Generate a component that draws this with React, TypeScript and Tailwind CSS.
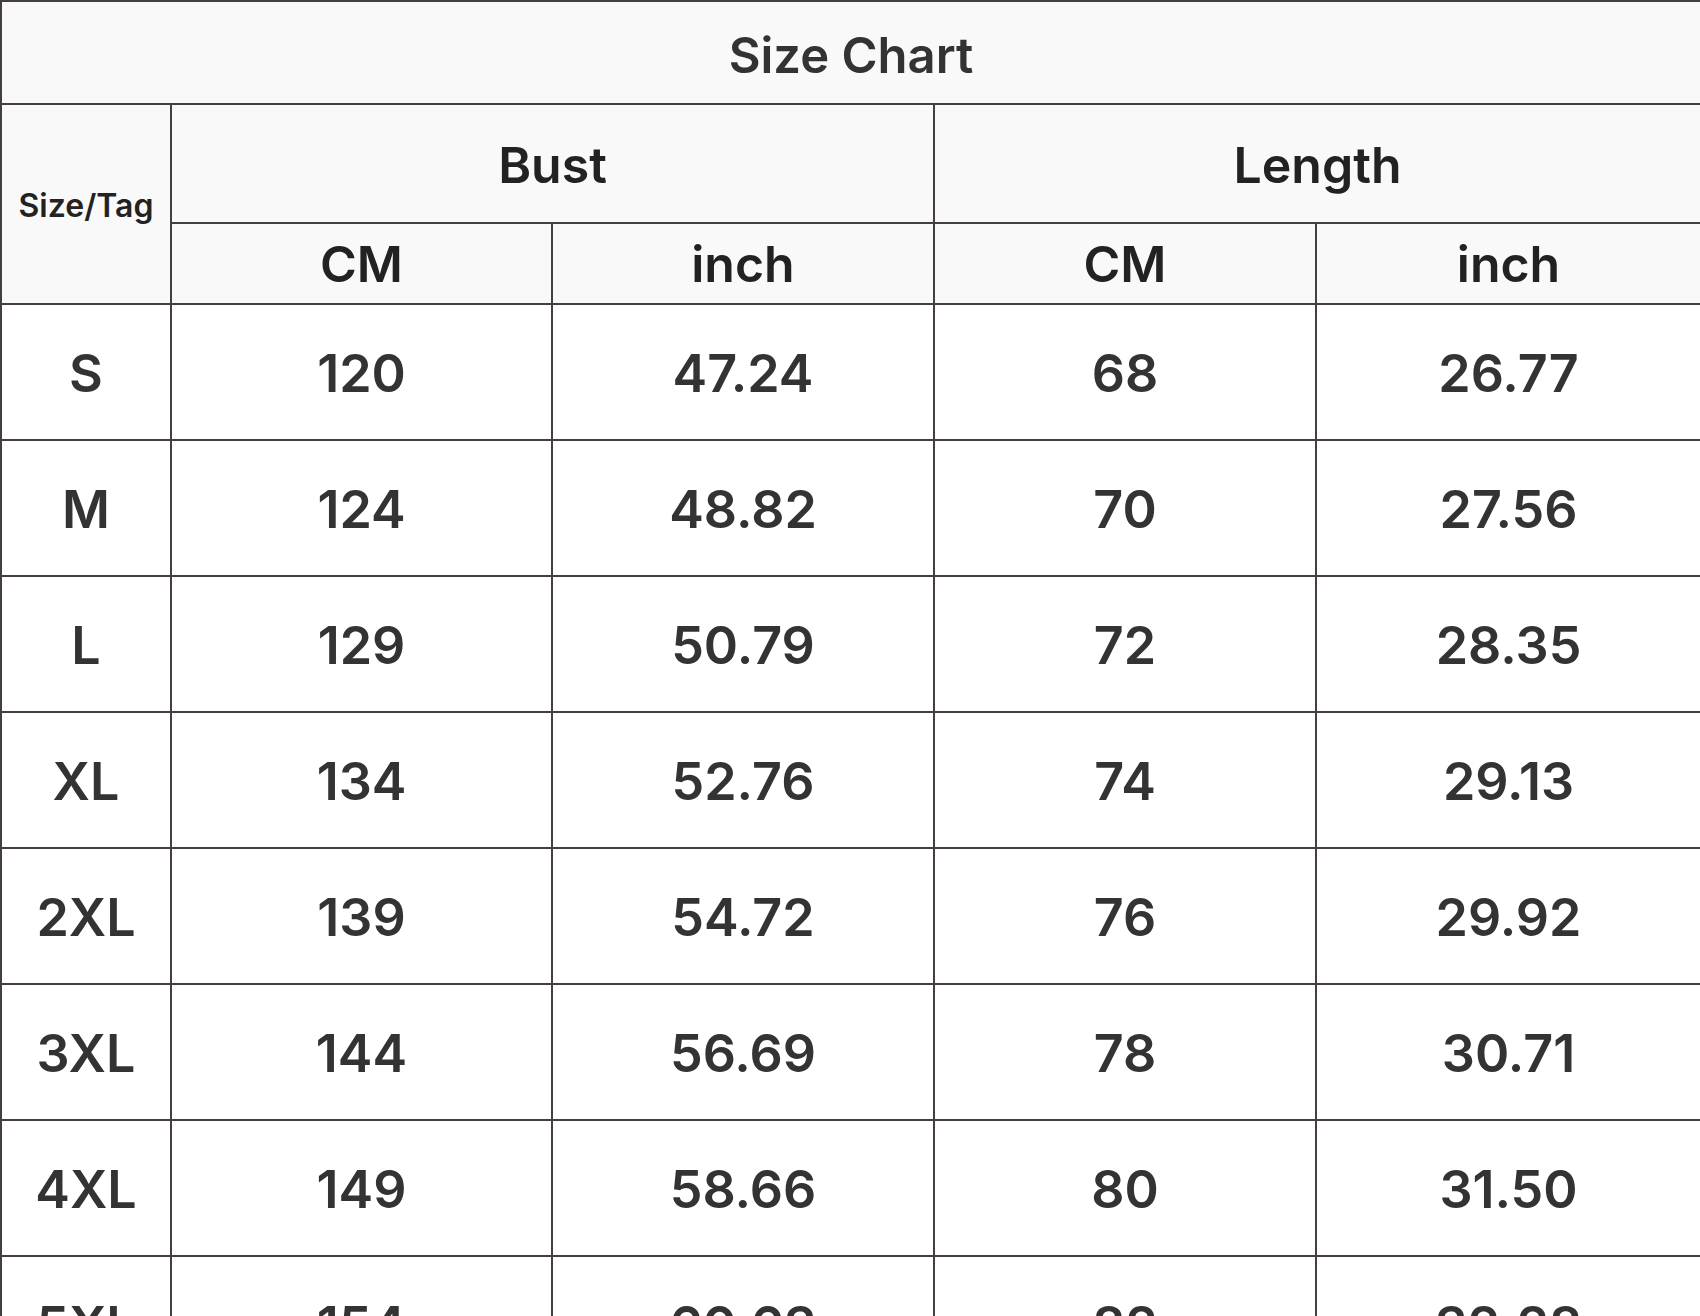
import React from 'react';

type Row = { size: string; bustCm: string; bustIn: string; lenCm: string; lenIn: string };

const ROWS: Row[] = [
  { size: 'S', bustCm: '120', bustIn: '47.24', lenCm: '68', lenIn: '26.77' },
  { size: 'M', bustCm: '124', bustIn: '48.82', lenCm: '70', lenIn: '27.56' },
  { size: 'L', bustCm: '129', bustIn: '50.79', lenCm: '72', lenIn: '28.35' },
  { size: 'XL', bustCm: '134', bustIn: '52.76', lenCm: '74', lenIn: '29.13' },
  { size: '2XL', bustCm: '139', bustIn: '54.72', lenCm: '76', lenIn: '29.92' },
  { size: '3XL', bustCm: '144', bustIn: '56.69', lenCm: '78', lenIn: '30.71' },
  { size: '4XL', bustCm: '149', bustIn: '58.66', lenCm: '80', lenIn: '31.50' },
  { size: '5XL', bustCm: '154', bustIn: '60.63', lenCm: '82', lenIn: '32.28' },
];

const cell = 'border-2 border-[#463f3f] text-center align-middle p-0';

const App: React.FC = () => {
  return (
    <div className="w-[1700px] h-[1316px] overflow-hidden bg-white font-['Inter','Liberation_Sans',sans-serif]">
      <table className="w-[1700px] table-fixed border-collapse">
        <colgroup>
          <col className="w-[170px]" />
          <col className="w-[381px]" />
          <col className="w-[382px]" />
          <col className="w-[382px]" />
          <col className="w-[385px]" />
        </colgroup>
        <thead className="bg-[#f9f9f9] text-[#222]">
          <tr className="h-[103px]">
            <th colSpan={5} className={`${cell} text-[49px] font-semibold text-[#333] pt-1.5`}>Size Chart</th>
          </tr>
          <tr className="h-[119px]">
            <th rowSpan={2} className={`${cell} text-[32px] font-semibold pt-1`}>Size/Tag</th>
            <th colSpan={2} className={`${cell} text-[50px] font-semibold pt-1`}>Bust</th>
            <th colSpan={2} className={`${cell} text-[50px] font-semibold pt-1`}>Length</th>
          </tr>
          <tr className="h-[81px]">
            <th className={`${cell} text-[50px] font-semibold pt-0.5`}>CM</th>
            <th className={`${cell} text-[50px] font-semibold pt-0.5`}>inch</th>
            <th className={`${cell} text-[50px] font-semibold pt-0.5`}>CM</th>
            <th className={`${cell} text-[50px] font-semibold pt-0.5`}>inch</th>
          </tr>
        </thead>
        <tbody className="text-[#333] text-[52px] font-semibold">
          {ROWS.map(row => (
            <tr key={row.size} className="h-[136px]">
              <td className={`${cell} pt-1`}>{row.size}</td>
              <td className={`${cell} pt-1`}>{row.bustCm}</td>
              <td className={`${cell} pt-1`}>{row.bustIn}</td>
              <td className={`${cell} pt-1`}>{row.lenCm}</td>
              <td className={`${cell} pt-1`}>{row.lenIn}</td>
            </tr>
          ))}
        </tbody>
      </table>
    </div>
  );
};

export default App;
